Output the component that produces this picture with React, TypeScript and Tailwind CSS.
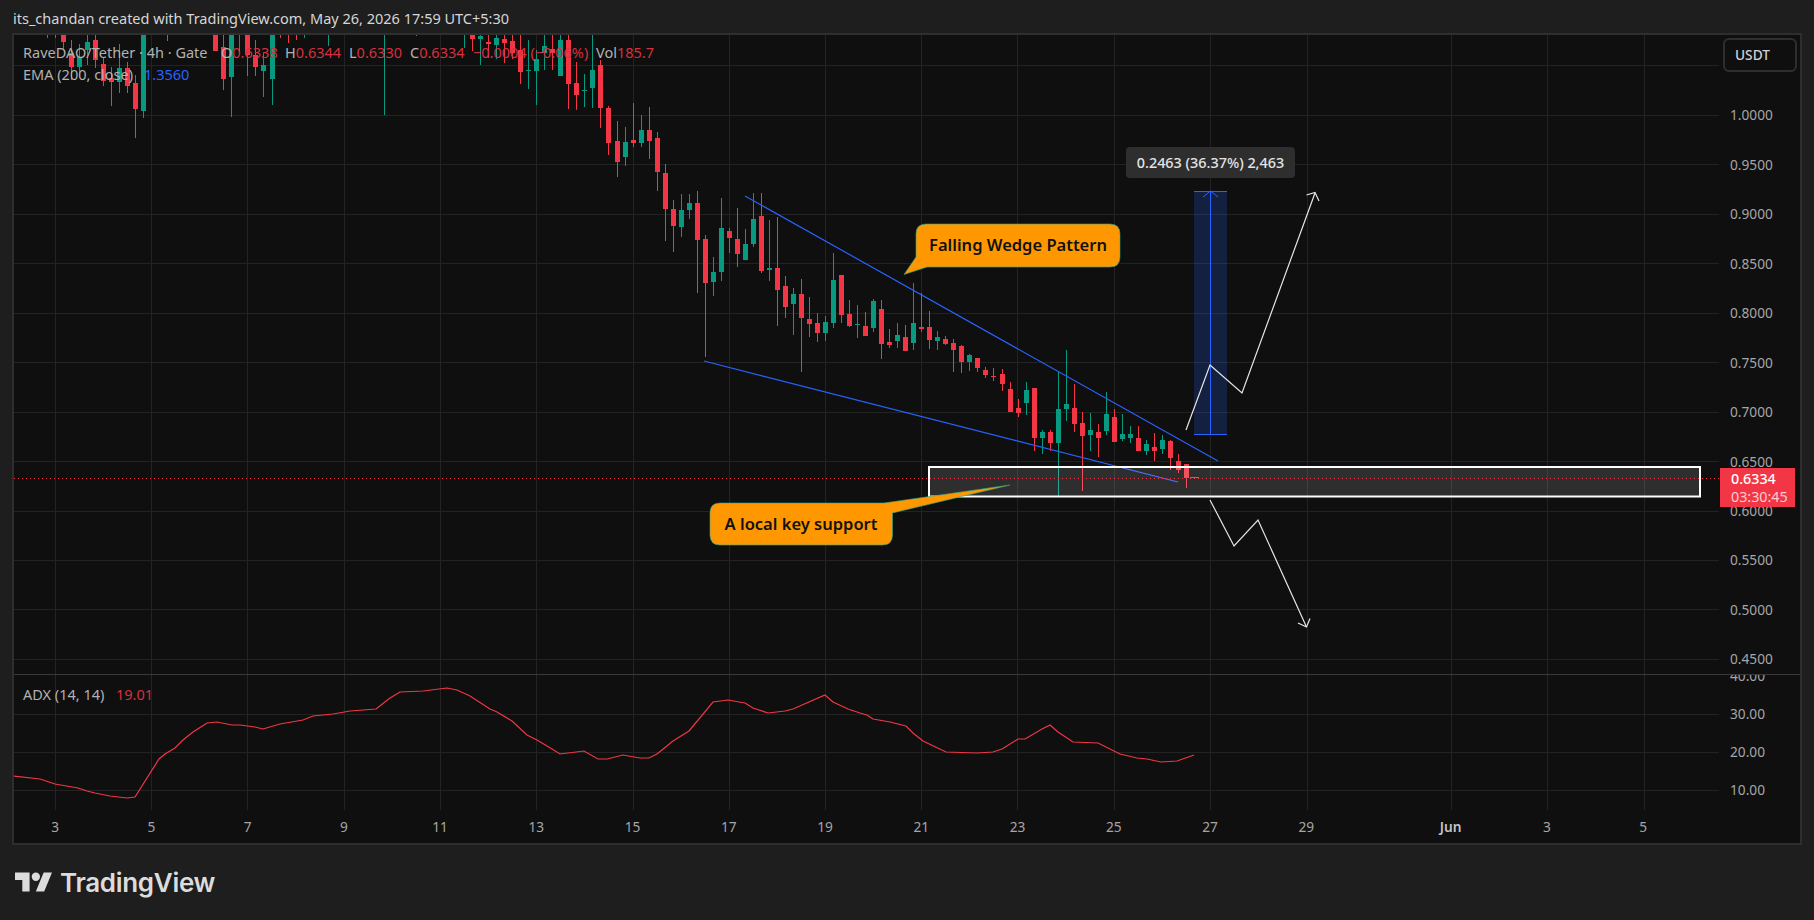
import React from "react";

const RED = "#F23645";
const GREEN = "#089981";
const BLUE = "#2962FF";

// x, body top, body bottom, wick top, wick bottom, up?
type Candle = [number, number, number, number, number, 0 | 1];

const candles: Candle[] = [
  [47, 30, 31, 30, 38, 0], [55, 30, 31, 30, 38, 0], [63, 30, 42, 30, 50, 0], [71, 53, 67, 40, 80, 0],
  [79, 57, 67, 44, 78, 1], [87, 42, 50, 30, 65, 1], [95, 40, 60, 30, 68, 0], [103, 64, 81, 57, 86, 0],
  [111, 78, 82, 67, 106, 0], [119, 68, 82, 44, 93, 1], [127, 68, 86, 62, 93, 0], [135, 83, 109, 75, 138, 0],
  [143, 30, 111, 30, 118, 1], [167, 30, 31, 30, 41, 0], [215, 30, 51, 30, 51, 0], [223, 47, 79, 30, 90, 0],
  [231, 30, 77, 30, 117, 1], [239, 30, 31, 30, 52, 1], [247, 30, 55, 30, 76, 0], [255, 55, 67, 40, 76, 0],
  [263, 65, 71, 52, 97, 1], [272, 30, 79, 30, 105, 1], [280, 30, 31, 30, 38, 0], [288, 30, 31, 30, 43, 0],
  [296, 30, 31, 30, 40, 0], [304, 30, 31, 30, 38, 1], [328, 30, 31, 30, 46, 1], [384, 30, 31, 30, 115, 1],
  [416, 30, 31, 30, 36, 1], [464, 30, 31, 30, 48, 1], [472, 30, 39, 30, 51, 0], [480, 36, 39, 30, 65, 1],
  [488, 42, 44, 30, 58, 0], [496, 38, 45, 30, 59, 1], [504, 39, 43, 30, 63, 0], [512, 41, 53, 30, 59, 0],
  [520, 50, 72, 30, 84, 0], [528, 70, 71, 40, 89, 1], [536, 59, 71, 50, 105, 1], [544, 46, 53, 30, 70, 1],
  [552, 49, 53, 30, 70, 0], [560, 40, 76, 30, 76, 1], [568, 40, 84, 30, 109, 0], [576, 83, 95, 62, 110, 0],
  [584, 90, 91, 74, 107, 1], [592, 70, 88, 30, 108, 1], [600, 65, 108, 60, 128, 0], [608, 108, 143, 106, 155, 0],
  [617, 141, 162, 121, 177, 0], [625, 142, 157, 127, 166, 1], [633, 140, 143, 103, 147, 0], [641, 130, 143, 115, 147, 1],
  [649, 130, 141, 107, 159, 0], [657, 138, 172, 132, 191, 0], [665, 173, 209, 164, 241, 0], [673, 209, 226, 200, 252, 0],
  [681, 210, 227, 194, 237, 1], [689, 203, 210, 194, 219, 1], [697, 203, 240, 191, 293, 0], [705, 239, 283, 235, 357, 0],
  [713, 272, 282, 257, 296, 1], [721, 228, 272, 198, 281, 1], [729, 231, 238, 228, 253, 0], [737, 239, 254, 208, 267, 0],
  [745, 244, 260, 229, 260, 1], [753, 219, 244, 193, 247, 1], [761, 216, 271, 193, 273, 0], [769, 268, 270, 220, 281, 1],
  [777, 268, 290, 217, 326, 0], [785, 286, 307, 276, 318, 0], [793, 294, 304, 288, 335, 1], [801, 294, 318, 279, 372, 0],
  [809, 319, 324, 297, 337, 0], [817, 323, 333, 313, 342, 0], [825, 322, 333, 316, 341, 1], [833, 280, 323, 253, 328, 1],
  [841, 275, 315, 275, 323, 0], [849, 314, 326, 300, 327, 0], [857, 324, 325, 305, 338, 1], [865, 326, 336, 312, 336, 0],
  [873, 301, 328, 299, 332, 1], [881, 309, 344, 300, 359, 0], [889, 342, 345, 329, 348, 0], [897, 335, 341, 323, 348, 1],
  [905, 337, 351, 325, 351, 0], [913, 323, 343, 283, 350, 1], [921, 327, 329, 293, 332, 0], [929, 327, 340, 311, 349, 0],
  [937, 337, 341, 331, 350, 1], [945, 339, 344, 336, 345, 0], [953, 343, 350, 339, 372, 0], [961, 346, 362, 345, 373, 0],
  [969, 355, 362, 354, 371, 1], [977, 358, 368, 358, 372, 0], [985, 370, 375, 367, 378, 0], [993, 376, 377, 368, 381, 0],
  [1002, 374, 384, 369, 391, 0], [1010, 389, 412, 382, 412, 0], [1018, 408, 413, 399, 417, 0], [1026, 390, 403, 382, 415, 1],
  [1034, 388, 438, 388, 451, 0], [1042, 432, 438, 430, 454, 1], [1050, 432, 443, 430, 451, 0], [1058, 409, 443, 372, 497, 1],
  [1066, 404, 409, 350, 421, 1], [1074, 408, 424, 384, 432, 0], [1082, 423, 436, 412, 491, 0], [1090, 430, 435, 413, 451, 1],
  [1098, 432, 438, 424, 457, 0], [1106, 414, 431, 392, 435, 1], [1114, 417, 442, 409, 442, 0], [1122, 434, 439, 414, 441, 1],
  [1130, 434, 438, 426, 443, 1], [1138, 438, 451, 426, 451, 0], [1146, 444, 451, 440, 455, 1], [1154, 447, 451, 433, 461, 0],
  [1162, 440, 449, 435, 454, 1], [1170, 441, 458, 440, 470, 0], [1178, 461, 470, 454, 473, 0], [1186, 464, 478, 464, 488, 0],
];

const adxPoints =
  "13,776 40,779 55,784 78,788 87,791 95,793 110,796 127,798 135,797 159,759 165,754 175,748 183,740 193,732 207,723 217,722 232,725 240,725 255,727 263,729 280,724 303,720 313,716 333,714 350,711 376,709 390,698 400,692 423,691 447,688 457,690 470,696 490,709 497,712 512,721 527,735 537,740 552,749 560,754 584,751 598,759 607,759 623,755 640,758 649,758 657,754 673,741 689,731 713,702 728,700 745,703 753,708 768,713 785,711 793,709 825,695 833,702 848,709 860,713 867,715 873,719 890,722 906,726 913,733 923,741 946,752 977,753 993,752 1002,749 1018,739 1025,739 1042,729 1050,725 1058,732 1073,742 1098,743 1120,754 1137,758 1147,759 1161,762 1177,761 1194,755";

const gridX = [55, 151, 247, 344, 440, 536, 633, 729, 825, 921, 1017, 1114, 1210, 1307, 1451, 1547, 1644];
const priceGridY = [65, 115, 164, 214, 263, 313, 362, 412, 461, 511, 560, 609, 659];
const adxGridY = [714, 752, 790];
const priceLabels = ["1.0000", "0.9500", "0.9000", "0.8500", "0.8000", "0.7500", "0.7000", "0.6500", "0.6000", "0.5500", "0.5000", "0.4500"];
const adxLabels = ["40.00", "30.00", "20.00", "10.00"];
const dayLabels = ["3", "5", "7", "9", "11", "13", "15", "17", "19", "21", "23", "25", "27", "29"];

const CandleBar = ({ c }: { c: Candle }) => {
  const color = c[5] ? GREEN : RED;
  return (
    <g fill={color}>
      <rect x={c[0]} y={c[3]} width={1} height={c[4] - c[3]} />
      <rect x={c[0] - 2} y={c[1]} width={5} height={Math.max(c[2] - c[1], 1)} />
    </g>
  );
};

const MainChart = () => (
  <svg width={1705} height={639} viewBox="14 35 1705 639" className="absolute inset-0">
    {gridX.map((x) => (
      <rect key={x} x={x} y={35} width={1} height={639} fill="#232323" />
    ))}
    {priceGridY.map((y) => (
      <rect key={y} x={14} y={y} width={1705} height={1} fill="#232323" />
    ))}

    {/* measure tool */}
    <rect x={1194} y={191} width={33} height={244} fill={BLUE} fillOpacity={0.2} />
    <path d="M1194 191.5H1227M1194 434.5H1227M1210.5 191V435M1203 197L1210.5 191L1218 197" stroke={BLUE} fill="none" />

    {candles.map((c) => (
      <CandleBar key={c[0]} c={c} />
    ))}
    <rect x={1190} y={477} width={9} height={1} fill={RED} />

    {/* wedge */}
    <path d="M745 196L1218 461M704 361L1178 482" stroke={BLUE} strokeWidth={1.2} fill="none" />

    {/* support zone */}
    <rect x={929} y={467} width={771} height={29.5} fill="#fff" fillOpacity={0.13} stroke="#fff" strokeWidth={2} />
    <path d="M14 478.5H1719" stroke={RED} strokeDasharray="1 3" />

    {/* projected moves */}
    <g fill="none" stroke="#e6e6e6" strokeWidth={1.2}>
      <path d="M1186 430L1210 365L1242 393L1315 193" />
      <path d="M1306.5 195L1315 192.5L1319 201" />
      <path d="M1210 500L1234 546L1258 520L1306.5 627" />
      <path d="M1298 623L1306.5 627L1310 618.5" />
    </g>

    {/* callouts */}
    <path
      d="M926 224H1110Q1120 224 1120 234V257Q1120 267 1110 267H927L904 274.5L916 257V234Q916 224 926 224Z"
      fill="#FF9800"
      stroke="#22AB94"
      strokeOpacity={0.6}
    />
    <path
      d="M720 503H884L1010 485L892.5 513V535Q892.5 545 882.5 545H720Q710 545 710 535V513Q710 503 720 503Z"
      fill="#FF9800"
      stroke="#22AB94"
      strokeOpacity={0.6}
    />
  </svg>
);

const AdxChart = () => (
  <svg width={1705} height={135} viewBox="14 675 1705 135" className="absolute inset-0">
    {gridX.map((x) => (
      <rect key={x} x={x} y={675} width={1} height={135} fill="#232323" />
    ))}
    {adxGridY.map((y) => (
      <rect key={y} x={14} y={y} width={1705} height={1} fill="#232323" />
    ))}
    <polyline points={adxPoints} fill="none" stroke={RED} strokeWidth={1.2} />
  </svg>
);

const Legend = () => (
  <div className="absolute left-[9px] top-[7px] flex flex-col gap-[2px] text-[14.5px] leading-[20px] text-[#b2b2b2]">
    <div className="flex whitespace-pre">
      <span className="w-[198px]">RaveDAO/Tether · 4h · Gate</span>
      <span className="w-[64px]">O<span className="text-[#d8303e]">0.6338</span></span>
      <span className="w-[64px]">H<span className="text-[#d8303e]">0.6344</span></span>
      <span className="w-[61px]">L<span className="text-[#d8303e]">0.6330</span></span>
      <span className="w-[63px]">C<span className="text-[#d8303e]">0.6334</span></span>
      <span className="w-[123px] text-[#d8303e]">−0.0004 (−0.06%)</span>
      <span>Vol<span className="text-[#d8303e]">185.7</span></span>
    </div>
    <div className="flex whitespace-pre">
      <span className="w-[121px]">EMA (200, close)</span>
      <span className="text-[#2962FF]">1.3560</span>
    </div>
  </div>
);

export default function App() {
  return (
    <div className="flex h-[920px] w-[1814px] flex-col overflow-hidden bg-[#1e1e1e] font-['Noto_Sans','Liberation_Sans',sans-serif]">
      <header className="flex h-[33px] items-center pl-[13px] pt-[4px] text-[14.5px] text-[#d6d6d6]">
        its_chandan created with TradingView.com, May 26, 2026 17:59 UTC+5:30
      </header>

      <main className="ml-[12px] flex h-[812px] w-[1790px] flex-col border-2 border-[#2e2e2e] bg-[#0f0f0f]">
        <div className="flex h-[639px]">
          <div className="relative w-[1705px] overflow-hidden">
            <MainChart />
            <Legend />
            <div className="absolute left-[902px] top-[189px] flex h-[43px] w-[204px] items-center justify-center whitespace-nowrap text-[16.5px] font-semibold text-[#111]">
              Falling Wedge Pattern
            </div>
            <div className="absolute left-[696px] top-[468px] flex h-[42px] w-[182px] items-center justify-center whitespace-nowrap text-[16.5px] font-semibold text-[#111]">
              A local key support
            </div>
            <div className="absolute left-[1112px] top-[112px] flex h-[31px] w-[169px] items-center justify-center whitespace-nowrap rounded-[4px] bg-[#2e2e2e] text-[14.4px] font-medium text-[#e4e4e4]">
              0.2463 (36.37%) 2,463
            </div>
          </div>
          <div className="relative w-[81px] overflow-hidden pl-[11px] pt-[56px] text-[13.7px] text-[#a6a6a6]">
            {priceLabels.map((p) => (
              <div key={p} className="flex h-[49.45px] items-center">
                {p}
              </div>
            ))}
            <div className="absolute left-[4px] top-[3px] flex h-[34px] w-[74px] items-center rounded-[6px] border-2 border-[#2e2e2e] bg-[#0f0f0f] pl-[10px] text-[13.7px] font-medium text-[#d1d1d1]">
              USDT
            </div>
            <div className="absolute left-[1px] top-[433px] flex h-[39px] w-[75px] flex-col justify-center bg-[#F23645] pl-[11px] text-[14.3px] leading-[18px] text-white">
              <span className="font-medium">0.6334</span>
              <span className="text-white/75">03:30:45</span>
            </div>
          </div>
        </div>

        <div className="h-px bg-[#3a3a3a]" />

        <div className="flex h-[135px]">
          <div className="relative w-[1705px] overflow-hidden">
            <AdxChart />
            <div className="absolute left-[9px] top-[9px] flex whitespace-pre text-[14.5px] leading-[20px] text-[#b2b2b2]">
              <span className="w-[93px]">ADX (14, 14)</span>
              <span className="text-[#d8303e]">19.01</span>
            </div>
          </div>
          <div className="h-full w-[81px] overflow-hidden pl-[11px] text-[13.7px] text-[#a6a6a6]">
            <div className="-mt-[18px]">
              {adxLabels.map((l) => (
                <div key={l} className="flex h-[38px] items-center">
                  {l}
                </div>
              ))}
            </div>
          </div>
        </div>

        <div className="flex flex-1 items-center pt-[2px] text-[13.7px] text-[#a6a6a6]">
          <div className="-ml-[7px] flex">
            {dayLabels.map((d) => (
              <div key={d} className="w-[96.25px] text-center">
                {d}
              </div>
            ))}
            <div className="w-[48px]" />
            <div className="w-[96.25px] text-center font-semibold text-[#c4c4c4]">Jun</div>
            <div className="w-[96.25px] text-center">3</div>
            <div className="w-[96.25px] text-center">5</div>
          </div>
        </div>
      </main>

      <footer className="flex flex-1 items-start gap-[8px] pl-[15px] pt-[25px] text-[#dcdcdc]">
        <svg width={37} height={20} viewBox="0 4 35.5 18" className="mt-[2px]" fill="currentColor">
          <path d="M14 22H7V11H0V4h14v18zM28 22h-8l7.5-18h8L28 22z" />
          <circle cx={20} cy={8} r={4} />
        </svg>
        <span className="font-['Inter',sans-serif] text-[26px] font-semibold leading-[26px] tracking-[-0.3px]">TradingView</span>
      </footer>
    </div>
  );
}
